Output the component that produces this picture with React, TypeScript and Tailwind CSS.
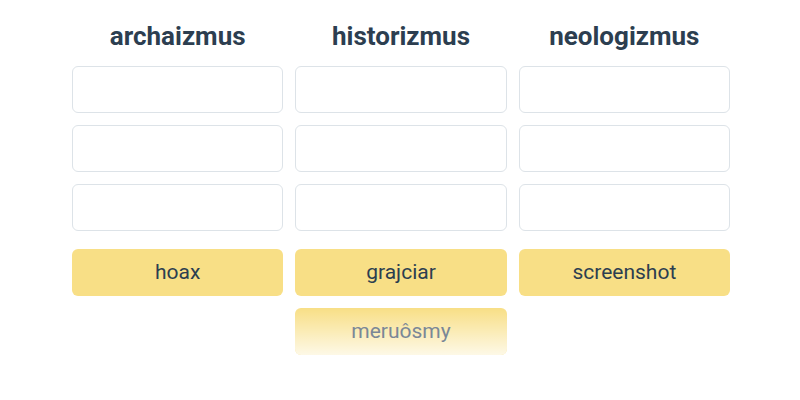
const columns = [
  { title: 'archaizmus', answer: 'hoax' },
  { title: 'historizmus', answer: 'grajciar' },
  { title: 'neologizmus', answer: 'screenshot' },
];

export default function App() {
  return (
    <div className="flex h-[400px] w-[800px] justify-center bg-white pl-[2px] pt-[20px] font-['Roboto',sans-serif] text-[#2c3e50]">
      <div className="grid w-[658px] grid-cols-3 gap-x-3">
        {columns.map((col, i) => (
          <div key={col.title} className="flex flex-col">
            <h2 className="mb-[13px] text-center text-[26px] font-bold leading-[33px]">{col.title}</h2>
            <div className="flex flex-col gap-3">
              {[0, 1, 2].map((n) => (
                <div key={n} className="h-[47px] rounded-md border border-[#dde3e8] bg-white" />
              ))}
            </div>
            <div className="mt-[18px] flex flex-col gap-3">
              <div className="flex h-[47px] items-center justify-center rounded-md bg-[#f8df86] text-[21px]">
                {col.answer}
              </div>
              {i === 1 && (
                <div className="relative flex h-[47px] items-center justify-center overflow-hidden rounded-md bg-[#f8df86] text-[21px]">
                  <div className="absolute inset-0 bg-gradient-to-b from-white/0 to-white/80" />
                  <span className="relative text-[#7a8797]">meruôsmy</span>
                </div>
              )}
            </div>
          </div>
        ))}
      </div>
    </div>
  );
}
